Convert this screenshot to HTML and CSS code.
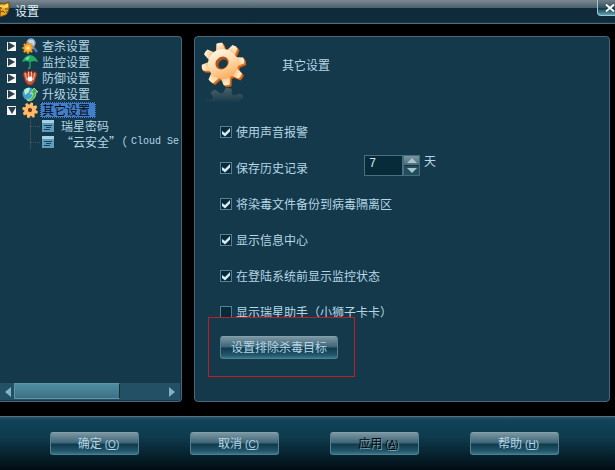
FILE: index.html
```html
<!DOCTYPE html>
<html lang="zh-CN">
<head>
    <meta charset="UTF-8">
    <meta name="viewport" content="width=device-width, initial-scale=1.0">
    <title>设置</title>
    <link rel="stylesheet" href="styles.css">
</head>
<body>
    <svg width="0" height="0" class="defs" aria-hidden="true">
        <defs>
            <linearGradient id="gold" x1="0.2" y1="0" x2="0.4" y2="1">
                <stop offset="0" stop-color="#fff6e6"/>
                <stop offset="0.5" stop-color="#ffdcae"/>
                <stop offset="1" stop-color="#fbb063"/>
            </linearGradient>
            <g id="gear">
                <path id="tooth" d="M-5 -12 L-3 -21 Q0 -22 3 -21 L5 -12 Z"/>
                <use href="#tooth" transform="rotate(45)"/>
                <use href="#tooth" transform="rotate(90)"/>
                <use href="#tooth" transform="rotate(135)"/>
                <use href="#tooth" transform="rotate(180)"/>
                <use href="#tooth" transform="rotate(225)"/>
                <use href="#tooth" transform="rotate(270)"/>
                <use href="#tooth" transform="rotate(315)"/>
                <circle r="15"/>
            </g>
        </defs>
    </svg>

    <header class="titlebar">
        <svg class="logo" width="10" height="18" viewBox="0 0 10 18">
            <path d="M0 3 L4 4 L9 2 Q10 12 6 15 L0 17 Z" fill="#e9a824" stroke="#6e4208"/>
            <path d="M0 5 L3 6 L8 4 V7 L5 8 L0 7 Z" fill="#ffd966"/>
            <path d="M0 8 H2 M5 9 H8 M0 12 L3 11 L5 13 M7 11 V13" stroke="#7a4708" fill="none"/>
        </svg>
        <h1>设置</h1>
        <button class="close" aria-label="关闭">
            <svg width="10" height="8" viewBox="0 0 10 8"><path d="M1 0.5 L9 7.5 M9 0.5 L1 7.5" stroke="#fff" stroke-width="1.8"/></svg>
        </button>
    </header>

    <main>
        <nav class="panel sidebar">
            <ul class="tree">
                <li>
                    <div class="node">
                        <button class="toggle" aria-label="展开"></button>
                        <svg width="16" height="16" viewBox="0 0 16 16">
                            <path d="M11 9 L15 14" stroke="#4a78c4" stroke-width="2.6"/>
                            <circle cx="9" cy="5" r="4" fill="#c8dcf0" stroke="#8aa4c8" stroke-width="1.5"/>
                            <g transform="translate(6 10) scale(0.27)"><use href="#gear" fill="#ffb638" stroke="#b86a10" stroke-width="2"/><circle r="6" fill="#fff0a8"/></g>
                        </svg>
                        <a href="#">查杀设置</a>
                    </div>
                </li>
                <li>
                    <div class="node">
                        <button class="toggle" aria-label="展开"></button>
                        <svg width="16" height="16" viewBox="0 0 16 16">
                            <path d="M8 6 V13 Q8 15 6 14" stroke="#2f9a68" stroke-width="1.4" fill="none"/>
                            <path d="M0 8 Q2 2 8 1 Q14 2 16 8 L12 7 L8 8 L4 7 Z" fill="#1fae62"/>
                            <path d="M3 5 Q5 3 8 2 L6 6 Z" fill="#7fe0a4"/>
                        </svg>
                        <a href="#">监控设置</a>
                    </div>
                </li>
                <li>
                    <div class="node">
                        <button class="toggle" aria-label="展开"></button>
                        <svg width="16" height="16" viewBox="0 0 16 16">
                            <path d="M1 4 L3 1 L5 3 L6 0 L8 2 L10 0 L11 3 L13 1 L15 4 L13 11 L10 15 H6 L3 11 Z" fill="#c4553a" stroke="#7a2c1c" stroke-width="0.8"/>
                            <path d="M3 3 L5 10 M6.5 2 V7 M9.5 2 V7 M13 3 L11 10" stroke="#f3b49a" fill="none"/>
                            <circle cx="8" cy="9" r="2.5" fill="#fff"/>
                        </svg>
                        <a href="#">防御设置</a>
                    </div>
                </li>
                <li>
                    <div class="node">
                        <button class="toggle" aria-label="展开"></button>
                        <svg width="16" height="16" viewBox="0 0 16 16">
                            <circle cx="7" cy="8" r="6.5" fill="#3fa0c8"/>
                            <path d="M2 4 Q5 1 8 2 L7 6 L3 9 Z" fill="#b6ecd0"/>
                            <path d="M5 14 Q11 13 11 7 L8 8 L12 2 L16 6 L14 6 Q14 14 7 15 Z" fill="#3cb64a" stroke="#d8f5c8" stroke-width="0.7"/>
                        </svg>
                        <a href="#">升级设置</a>
                    </div>
                </li>
                <li>
                    <div class="node">
                        <button class="toggle open" aria-label="收起"></button>
                        <svg width="16" height="16" viewBox="0 0 16 16">
                            <g transform="translate(8 8) rotate(15) scale(0.36)"><use href="#gear" fill="#e98a2c" x="1" y="2"/><use href="#gear" fill="#ffbc6c"/><circle r="6" fill="#713a18"/></g>
                        </svg>
                        <a href="#" class="selected" aria-current="page">其它设置</a>
                    </div>
                    <ul class="children">
                        <li class="node">
                            <svg width="12" height="12" viewBox="0 0 12 12"><path d="M0 0 H12 V12 H0 Z" fill="#5f9dbd"/><path d="M0 0 H12 V3 H0 Z" fill="#a6cfe2"/><path d="M2 5.5 H10 M4 7.5 H9 M2 9.5 H8" stroke="#16445e"/></svg>
                            <a href="#">瑞星密码</a>
                        </li>
                        <li class="node">
                            <svg width="12" height="12" viewBox="0 0 12 12"><path d="M0 0 H12 V12 H0 Z" fill="#5f9dbd"/><path d="M0 0 H12 V3 H0 Z" fill="#a6cfe2"/><path d="M2 5.5 H10 M4 7.5 H9 M2 9.5 H8" stroke="#16445e"/></svg>
                            <a href="#" class="mixed">“云安全”（<span class="latin">Cloud Se</span></a>
                        </li>
                    </ul>
                </li>
            </ul>
            <div class="scrollbar">
                <button aria-label="向左"><svg width="6" height="10" viewBox="0 0 6 10"><path d="M6 0 V10 L0 5 Z" fill="#7fb4c8"/></svg></button>
                <div class="track"><div class="thumb"></div></div>
                <button aria-label="向右"><svg width="6" height="10" viewBox="0 0 6 10"><path d="M0 0 V10 L6 5 Z" fill="#7fb4c8"/></svg></button>
            </div>
        </nav>

        <section class="panel content">
            <div class="heading">
                <svg width="48" height="64" viewBox="0 0 48 64">
                    <defs>
                        <linearGradient id="fade" x1="0" y1="46" x2="0" y2="62" gradientUnits="userSpaceOnUse">
                            <stop offset="0" stop-color="#fff" stop-opacity="0.4"/>
                            <stop offset="1" stop-color="#fff" stop-opacity="0"/>
                        </linearGradient>
                        <mask id="mirror"><rect y="46" width="48" height="18" fill="url(#fade)"/></mask>
                    </defs>
                    <g mask="url(#mirror)">
                        <g transform="translate(24 64) scale(1 -0.8) rotate(-10)"><use href="#gear" fill="#a9a49a"/></g>
                    </g>
                    <g transform="translate(24 25) rotate(-10)"><use href="#gear" fill="#c95a12"/></g>
                    <g transform="translate(23 24) rotate(-10)"><use href="#gear" fill="#e07a26"/></g>
                    <g transform="translate(22 23) rotate(-10)"><use href="#gear" fill="url(#gold)"/></g>
                    <ellipse cx="21" cy="22" rx="7" ry="6" transform="rotate(-40 21 22)" fill="#b3521a"/>
                    <ellipse cx="22" cy="23" rx="5" ry="4" transform="rotate(-40 22 23)" fill="#14394a"/>
                </svg>
                <h2>其它设置</h2>
            </div>

            <form class="options">
                <div class="row"><label><input type="checkbox" checked>使用声音报警</label></div>
                <div class="row">
                    <label class="history"><input type="checkbox" checked>保存历史记录</label>
                    <div class="days">
                        <input type="text" id="days" value="7">
                        <div class="spinner">
                            <button type="button" aria-label="增加"><svg width="10" height="5" viewBox="0 0 10 5"><path d="M0 5 L5 0 L10 5 Z" fill="#a9c3cd"/></svg></button>
                            <button type="button" aria-label="减少"><svg width="10" height="5" viewBox="0 0 10 5"><path d="M0 0 L5 5 L10 0 Z" fill="#a9c3cd"/></svg></button>
                        </div>
                        <label for="days">天</label>
                    </div>
                </div>
                <div class="row"><label><input type="checkbox" checked>将染毒文件备份到病毒隔离区</label></div>
                <div class="row"><label><input type="checkbox" checked>显示信息中心</label></div>
                <div class="row"><label><input type="checkbox" checked>在登陆系统前显示监控状态</label></div>
                <div class="row"><label><input type="checkbox">显示瑞星助手（小狮子卡卡）</label></div>
                <div class="row marked"><button type="button" class="btn wide">设置排除杀毒目标</button></div>
            </form>
        </section>
    </main>

    <footer>
        <button class="btn">确定<span class="key">(<u>O</u>)</span></button>
        <button class="btn">取消<span class="key">(<u>C</u>)</span></button>
        <button class="btn" disabled>应用<span class="key">(<u>A</u>)</span></button>
        <button class="btn">帮助<span class="key">(<u>H</u>)</span></button>
    </footer>
</body>
</html>
```

FILE: styles.css
```css
*, *::before, *::after {
    box-sizing: border-box;
}
body {
    margin: 0;
    min-height: 100vh;
    display: flex;
    flex-direction: column;
    background: #000;
    color: #b4d6e6;
    font: 12px/16px "Noto Sans CJK SC", sans-serif;
}
h1, h2 {
    margin: 0;
    font-size: 12px;
    font-weight: normal;
}
button {
    padding: 0;
    border: none;
    background: none;
    color: inherit;
    font: inherit;
}
a {
    color: inherit;
    text-decoration: none;
}
ul {
    list-style: none;
    margin: 0;
    padding: 0;
}
svg {
    display: block;
    flex: none;
}
.defs {
    position: absolute;
}

/* title bar */
.titlebar {
    display: flex;
    align-items: flex-start;
    height: 24px;
    border-bottom: 1px solid #526b7a;
    background: linear-gradient(#7b8991, #49606c 8px, #0f2a3a 8px, #102b3b 22px, #2b4555);
}
.titlebar h1 {
    flex: 1;
    margin: 3px 0 0 5px;
    color: #e4f3fa;
}
.close {
    display: flex;
    align-items: center;
    justify-content: flex-end;
    width: 18px;
    height: 16px;
    border: 1px solid #a7c6d0;
    border-width: 0 0 1px 1px;
    border-bottom-left-radius: 4px;
    background: linear-gradient(#6d7d85, #33505c 8px, #123340 8px, #58a7b5);
}

/* panels */
main {
    flex: 1;
    display: grid;
    grid-template-columns: 182px 1fr;
    gap: 12px;
    padding: 12px 5px 14px 0;
}
.panel {
    min-width: 0;
    border: 1px solid #486778;
    border-radius: 4px;
    background: #14394a;
}
.sidebar {
    display: flex;
    flex-direction: column;
    justify-content: space-between;
    border-left: none;
    border-radius: 0 4px 4px 0;
    padding: 1px 1px 1px 0;
    overflow: hidden;
}

/* tree */
.node {
    display: flex;
    align-items: center;
    height: 16px;
    padding-left: 7px;
    white-space: nowrap;
}
.node svg {
    margin: 0 2px 0 6px;
}
.node a {
    padding: 0 2px;
}
.node .selected {
    padding: 0 5px 0 1px;
    border: 1px dotted #10233f;
    line-height: 14px;
    background: #427fc9;
    color: #050a12;
}
.toggle {
    display: flex;
    align-items: center;
    justify-content: center;
    width: 9px;
    height: 9px;
    background: #f4f6f7;
}
.toggle::before {
    content: "";
    border: 4px solid transparent;
    border-left: 7px solid #2c3e4c;
    border-right: none;
}
.toggle.open::before {
    border: 4px solid transparent;
    border-top: 7px solid #2c3e4c;
    border-bottom: none;
}
.children {
    margin-left: 30px;
}
.children .node {
    padding-left: 0;
    background: linear-gradient(90deg, #3b4c50 1px, transparent 1px);
}
.children .node::before {
    content: "";
    flex: none;
    width: 10px;
    border-top: 1px dotted #4d5550;
}
.children .node svg {
    margin: 0 5px 0 2px;
}
.mixed {
    display: flex;
    align-items: center;
}
.latin {
    margin-left: 4px;
    font: 10px/16px "Liberation Mono", monospace;
}

/* scrollbar */
.scrollbar {
    display: flex;
    height: 17px;
    background: #235064;
}
.scrollbar button {
    display: flex;
    align-items: center;
    justify-content: flex-end;
    width: 14px;
    padding-right: 3px;
}
.scrollbar button:last-child {
    justify-content: center;
}
.track {
    flex: 1;
}
.thumb {
    width: 70%;
    height: 16px;
    border: 1px solid #6095a8;
    border-right-color: #12303e;
    background: linear-gradient(#4f8ca0, #3c7185);
}

/* settings */
.heading {
    display: flex;
    height: 77px;
    padding: 4px 0 0 6px;
}
.heading h2 {
    margin: 16px 0 0 33px;
}
.options {
    padding-left: 25px;
}
.row {
    display: flex;
    align-items: center;
    height: 36px;
}
.row label {
    display: flex;
    align-items: center;
}
.history {
    width: 144px;
}
input[type="checkbox"] {
    appearance: none;
    width: 12px;
    height: 12px;
    margin: 0 4px 0 0;
    border: 1px solid #56808f;
    background: #072b39;
}
input[type="checkbox"]:checked::before {
    content: "";
    display: block;
    width: 10px;
    height: 10px;
    background: #d5ecf4;
    clip-path: polygon(10% 40%, 40% 60%, 90% 10%, 90% 45%, 40% 95%, 10% 70%);
}
.days {
    display: flex;
    align-items: flex-start;
    margin-bottom: 6px;
}
.days input {
    width: 39px;
    height: 21px;
    padding: 0 4px 2px;
    border: 1px solid #4a6f80;
    background: #072b39;
    color: #d0e6ee;
    font: 12px "Liberation Mono", monospace;
}
.days label {
    margin: -2px 0 0 4px;
}
.spinner {
    display: flex;
    flex-direction: column;
    width: 17px;
    border: 1px solid #496c7a;
}
.spinner button {
    display: flex;
    align-items: center;
    justify-content: center;
    height: 9px;
    background: linear-gradient(#7b959e, #4b6c79);
}
.spinner button + button {
    border-top: 1px solid #123441;
    height: 10px;
    background: #224d5e;
}

/* buttons */
.btn {
    width: 89px;
    height: 23px;
    padding: 0 0 1px 8px;
    border: 1px solid #56808f;
    border-top-color: #83a0ac;
    border-bottom-color: #4c7f90;
    border-radius: 3px;
    background: linear-gradient(#7996a2, #3f6475 10px, #0e3a4d 11px, #22566a 18px, #3b7487);
}
.btn.wide {
    width: 118px;
    margin-bottom: 2px;
    padding: 0 0 1px;
}
.btn:disabled {
    color: #05090c;
    text-shadow: 1px 1px 0 #7ba0ae;
}
.key {
    margin-left: 3px;
    font: 10px "Liberation Sans", sans-serif;
}
.marked {
    position: relative;
}
/* red box drawn around the exclusion button */
.marked::after {
    content: "";
    position: absolute;
    top: -13px;
    left: -12px;
    width: 147px;
    height: 60px;
    border: 1px solid #c41c24;
    pointer-events: none;
}

footer {
    display: flex;
    justify-content: space-between;
    height: 54px;
    padding: 15px 56px 0 50px;
    border-top: 1px solid #4f7584;
    background: linear-gradient(#2c5566, #11435a 3px, #0e3b4d 20px, #03141c 48px, #020b10);
}
```
